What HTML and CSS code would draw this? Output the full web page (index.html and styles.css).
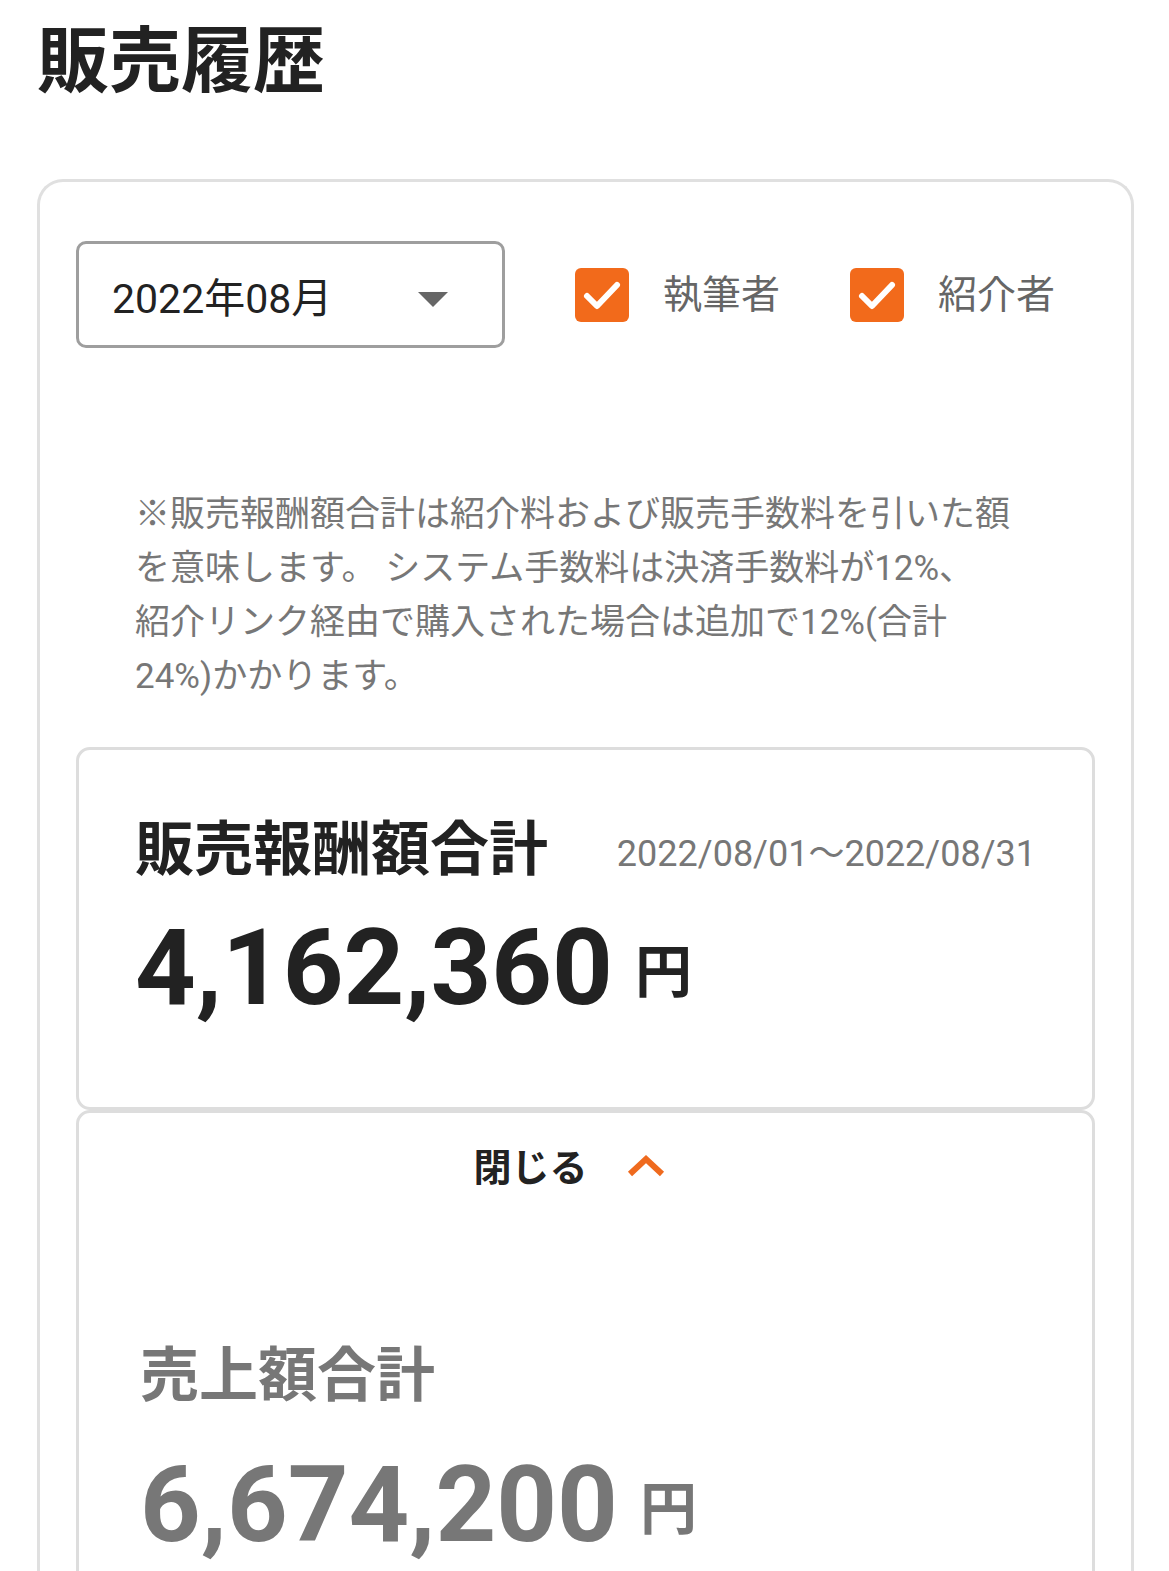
FILE: index.html
```html
<!DOCTYPE html>
<html lang="ja">
<head>
    <meta charset="UTF-8">
    <meta name="viewport" content="width=device-width, initial-scale=1.0">
    <title>販売履歴</title>
    <link rel="stylesheet" href="styles.css">
</head>
<body>

    <div class="page">
        <h1 class="page-title">販売履歴</h1>

        <div class="panel">
            <div class="filters">
                <div class="month-select">
                    <span>2022年08月</span>
                    <span class="caret"></span>
                </div>

                <label class="check">
                    <span class="check-box">
                        <svg viewBox="0 0 54 54" width="54" height="54"><path d="M12 28 L22 38 L42 17" fill="none" stroke="#fff" stroke-width="6" stroke-linecap="round" stroke-linejoin="round"/></svg>
                    </span>
                    <span class="check-label">執筆者</span>
                </label>

                <label class="check">
                    <span class="check-box">
                        <svg viewBox="0 0 54 54" width="54" height="54"><path d="M12 28 L22 38 L42 17" fill="none" stroke="#fff" stroke-width="6" stroke-linecap="round" stroke-linejoin="round"/></svg>
                    </span>
                    <span class="check-label">紹介者</span>
                </label>
            </div>

            <p class="note">※販売報酬額合計は紹介料および販売手数料を引いた額<br>を意味します。 システム手数料は決済手数料が12%、<br>紹介リンク経由で購入された場合は追加で12%(合計<br>24%)かかります。</p>

            <div class="card">
                <div class="card-head">
                    <h2 class="card-title">販売報酬額合計</h2>
                    <span class="period">2022/08/01〜2022/08/31</span>
                </div>
                <div class="amount">4,162,360<span class="yen">円</span></div>
            </div>

            <div class="card card-detail">
                <div class="toggle">
                    <span>閉じる</span>
                    <svg class="chevron" viewBox="0 0 40 26" width="40" height="26"><path d="M4 22 L20 7 L36 22" fill="none" stroke="#ef6a1e" stroke-width="6"/></svg>
                </div>

                <div class="sub-block">
                    <h3 class="sub-title">売上額合計</h3>
                    <div class="amount amount-gray">6,674,200<span class="yen">円</span></div>
                </div>
            </div>
        </div>
    </div>

</body>
</html>
```

FILE: styles.css
```css
body {
    margin: 0;
    padding: 0;
    background-color: #fff;
    font-family: Roboto, "Noto Sans CJK JP", sans-serif;
    color: #222;
}

.page {
    padding: 0 35px 0 37px;
}

.page-title {
    margin: 0;
    padding-top: 12px;
    font-size: 72px;
    line-height: 100px;
    font-weight: 700;
    color: #222;
}

.panel {
    margin-top: 67px;
    border: 3px solid #e0e0e0;
    border-bottom: none;
    border-radius: 26px 26px 0 0;
    padding: 59px 36px 40px 36px;
    min-height: 1340px;
}

.filters {
    display: flex;
    align-items: center;
}

.month-select {
    width: 429px;
    height: 107px;
    box-sizing: border-box;
    border: 3px solid #9e9e9e;
    border-radius: 10px;
    padding: 0 54px 0 33px;
    display: flex;
    align-items: center;
    justify-content: space-between;
    font-size: 41px;
    color: #222;
}

.caret {
    width: 0;
    height: 0;
    border-left: 15px solid transparent;
    border-right: 15px solid transparent;
    border-top: 15px solid #666;
    margin-top: 10px;
}

.check {
    display: flex;
    align-items: center;
    margin-left: 70px;
}

.check-box {
    width: 54px;
    height: 54px;
    border-radius: 6px;
    background-color: #f26a1b;
    display: block;
}

.check-box svg {
    display: block;
}

.check-label {
    margin-left: 34px;
    padding-bottom: 7px;
    font-size: 39px;
    color: #666;
}

.note {
    margin: 140px 0 43px 59px;
    font-size: 35px;
    line-height: 54px;
    color: #777;
}

.card {
    border: 3px solid #ddd;
    border-radius: 14px;
}

.card-head {
    display: flex;
    align-items: center;
    padding: 62px 56px 0 56px;
    justify-content: space-between;
}

.card-title {
    margin: 0;
    font-size: 59px;
    line-height: 76px;
    font-weight: 700;
    color: #222;
}

.period {
    font-size: 36px;
    color: #777;
}

.amount {
    padding: 20px 56px 74px 56px;
    font-size: 106px;
    line-height: 120px;
    font-weight: 700;
    color: #222;
}

.yen {
    font-size: 57px;
    margin-left: 22px;
    vertical-align: 12px;
}

.card-detail {
    min-height: 500px;
    border-bottom-left-radius: 0;
    border-bottom-right-radius: 0;
}

.toggle {
    display: flex;
    justify-content: center;
    align-items: center;
    padding: 24px 32px 0 0;
    font-size: 38px;
    font-weight: 700;
    color: #222;
}

.chevron {
    margin-left: 38px;
}

.sub-block {
    padding: 146px 56px 0 61px;
}

.sub-title {
    margin: 0;
    font-size: 59px;
    line-height: 76px;
    font-weight: 700;
    color: #777;
}

.amount-gray {
    color: #777;
    padding: 31px 0 0 0;
}
```
